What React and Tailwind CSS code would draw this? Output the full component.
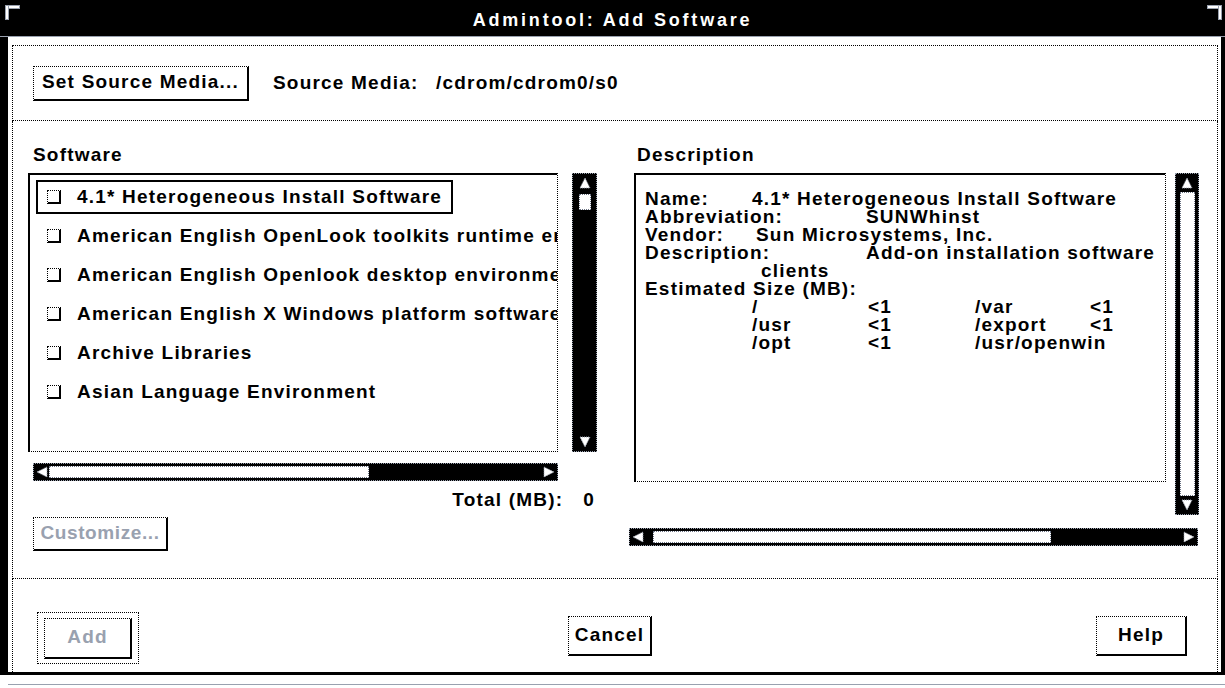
import React from "react";

const FONT = { fontFamily: '"Liberation Sans", Arial, sans-serif' };

// OpenLook style button: dotted top/left, solid black bottom/right
const Btn = ({ children, className = "", disabled = false }) => (
  <div
    className={`flex items-center justify-center bg-white border border-dotted border-black border-r-2 border-b-2 [border-right-style:solid] [border-bottom-style:solid] ${
      disabled ? "text-gray-400" : "text-black"
    } ${className}`}
  >
    {children}
  </div>
);

const Check = () => (
  <div className="w-[14px] h-[14px] shrink-0 bg-white border border-dotted border-black border-r-2 border-b-2 [border-right-style:solid] [border-bottom-style:solid]" />
);

const Arrow = ({ dir }) => {
  const pts = {
    up: "6,1 11,11 1,11",
    down: "1,1 11,1 6,11",
    left: "1,6 11,1 11,11",
    right: "1,1 11,6 1,11",
  }[dir];
  return (
    <svg width="12" height="12" viewBox="0 0 12 12" className="shrink-0">
      <polygon points={pts} fill="#fff" stroke="#9ca3af" strokeWidth="1" strokeDasharray="1 1" />
    </svg>
  );
};

const items = [
  "4.1* Heterogeneous Install Software",
  "American English OpenLook toolkits runtime environment",
  "American English Openlook desktop environment",
  "American English X Windows platform software",
  "Archive Libraries",
  "Asian Language Environment",
];

export default function App() {
  return (
    <div
      className="w-[1225px] h-[688px] bg-white relative overflow-hidden flex flex-col text-[19px] tracking-[1.2px] font-bold text-black"
      style={FONT}
    >
      {/* window corner handles */}
      <div className="absolute left-[5px] top-[5px] w-[15px] h-[4px] bg-white border border-gray-400" />
      <div className="absolute left-[5px] top-[5px] w-[4px] h-[15px] bg-white border border-gray-400" />
      <div className="absolute right-[3px] top-[5px] w-[15px] h-[4px] bg-white border border-gray-400" />
      <div className="absolute right-[3px] top-[5px] w-[4px] h-[15px] bg-white border border-gray-400" />

      {/* title bar */}
      <div className="h-[36px] bg-black flex items-center justify-center text-white text-[18px] tracking-[2.8px] pt-[4px]">
        Admintool: Add Software
      </div>
      <div className="h-px bg-gray-400" />

      {/* window body */}
      <div className="h-[638px] border-l-[8px] border-r-[4px] border-b-[3px] border-black pl-[4px] pr-[3px] pt-[8px] flex flex-col">
        {/* source media panel */}
        <div className="h-[76px] shrink-0 border border-dotted border-black flex items-center pl-[20px]">
          <Btn className="w-[216px] h-[35px]">Set Source Media...</Btn>
          <span className="ml-[24px] w-[163px]">Source Media:</span>
          <span>/cdrom/cdrom0/s0</span>
        </div>

        {/* software + description panel */}
        <div className="h-[458px] shrink-0 border-x border-b border-dotted border-black pl-[15px] pt-[23px] flex">
          {/* software column */}
          <div className="w-[569px] flex flex-col">
            <div className="h-[22px] leading-[22px] ml-[5px] mb-[7px]">Software</div>
            <div className="flex gap-[14px]">
              <div className="w-[530px] h-[279px] border-t-2 border-l-2 border-black border-r border-b [border-right-style:dotted] [border-bottom-style:dotted] overflow-hidden pt-[5px] pl-[6px]">
                {items.map((t, i) => (
                  <div
                    key={t}
                    className={`h-[34px] mb-[5px] flex items-center gap-[16px] pl-[9px] pr-[9px] whitespace-nowrap ${
                      i === 0 ? "border-2 border-black w-fit" : "border-2 border-transparent"
                    }`}
                  >
                    <Check />
                    <span>{t}</span>
                  </div>
                ))}
              </div>
              {/* vertical scrollbar */}
              <div className="w-[25px] h-[279px] bg-black border border-dotted border-gray-400 flex flex-col items-center py-[3px]">
                <Arrow dir="up" />
                <div className="w-[12px] h-[16px] bg-white border border-dotted border-gray-500 mt-[5px]" />
                <div className="flex-1" />
                <Arrow dir="down" />
              </div>
            </div>
            {/* horizontal scrollbar */}
            <div className="ml-[5px] mt-[11px] w-[525px] h-[18px] bg-black border border-dotted border-gray-400 flex items-center px-[2px]">
              <Arrow dir="left" />
              <div className="w-[320px] h-[12px] bg-white border border-dotted border-gray-500 ml-[1px]" />
              <div className="flex-1" />
              <Arrow dir="right" />
            </div>
            <div className="mt-[9px] h-[20px] leading-[20px] flex justify-end pr-[2px]">
              <span>Total (MB):</span>
              <span className="ml-[20px]">0</span>
            </div>
            <Btn disabled className="ml-[5px] mt-[7px] w-[135px] h-[34px] tracking-[0.6px]">
              Customize...
            </Btn>
          </div>

          {/* description column */}
          <div className="ml-[32px] w-[570px] flex flex-col">
            <div className="h-[22px] leading-[22px] ml-[8px] mb-[7px]">Description</div>
            <div className="flex items-start gap-[9px]">
              <div className="ml-[5px] w-[532px] h-[309px] border-t-2 border-l-2 border-black border-r border-b [border-right-style:dotted] [border-bottom-style:dotted] overflow-hidden pt-[15px] pl-[9px] leading-[18px] whitespace-nowrap">
                <div className="flex"><span className="w-[107px]">Name:</span><span>4.1* Heterogeneous Install Software</span></div>
                <div className="flex"><span className="w-[221px]">Abbreviation:</span><span>SUNWhinst</span></div>
                <div className="flex"><span className="w-[111px]">Vendor:</span><span>Sun Microsystems, Inc.</span></div>
                <div className="flex"><span className="w-[221px]">Description:</span><span>Add-on installation software</span></div>
                <div className="pl-[116px]">clients</div>
                <div>Estimated Size (MB):</div>
                <div className="flex pl-[107px]"><span className="w-[116px]">/</span><span className="w-[107px]">&lt;1</span><span className="w-[115px]">/var</span><span>&lt;1</span></div>
                <div className="flex pl-[107px]"><span className="w-[116px]">/usr</span><span className="w-[107px]">&lt;1</span><span className="w-[115px]">/export</span><span>&lt;1</span></div>
                <div className="flex pl-[107px]"><span className="w-[116px]">/opt</span><span className="w-[107px]">&lt;1</span><span>/usr/openwin</span></div>
              </div>
              {/* vertical scrollbar */}
              <div className="w-[24px] h-[342px] bg-black border border-dotted border-gray-400 flex flex-col items-center py-[3px]">
                <Arrow dir="up" />
                <div className="w-[15px] flex-1 bg-white border border-dotted border-gray-500 my-[3px]" />
                <Arrow dir="down" />
              </div>
            </div>
            {/* horizontal scrollbar */}
            <div className="mt-[13px] w-[569px] h-[18px] bg-black border border-dotted border-gray-400 flex items-center px-[2px]">
              <Arrow dir="left" />
              <div className="w-[398px] h-[12px] bg-white border border-dotted border-gray-500 ml-[9px]" />
              <div className="flex-1" />
              <Arrow dir="right" />
            </div>
          </div>
        </div>

        {/* bottom buttons */}
        <div className="flex-1 border-x border-dotted border-black pl-[24px] pt-[33px] flex items-start">
          <div className="w-[102px] h-[52px] border border-dotted border-black flex items-center justify-center">
            <Btn disabled className="w-[88px] h-[41px]">Add</Btn>
          </div>
          <Btn className="ml-[429px] mt-[4px] w-[84px] h-[40px]">Cancel</Btn>
          <Btn className="ml-[444px] mt-[4px] w-[91px] h-[40px]">Help</Btn>
        </div>
      </div>
      <div className="h-[9px]" />
      <div className="h-px bg-gray-400 ml-[8px]" />
    </div>
  );
}
